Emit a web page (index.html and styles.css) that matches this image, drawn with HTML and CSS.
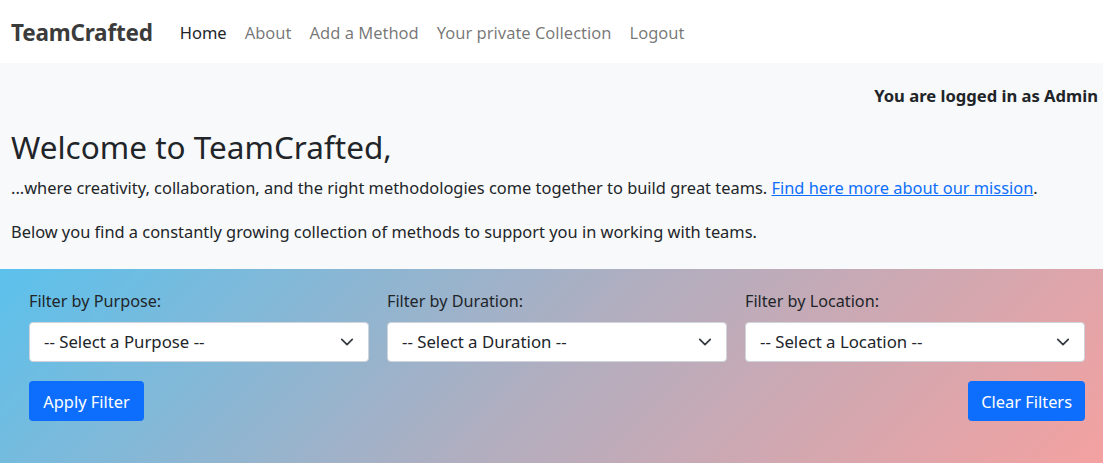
FILE: index.html
```html
<!DOCTYPE html>
<html lang="en">
<head>
<meta charset="utf-8">
<title>TeamCrafted</title>
<link rel="stylesheet" href="styles.css">
</head>
<body>
<nav class="navbar">
  <a class="brand" href="#">TeamCrafted</a>
  <ul class="nav">
    <li><a class="nav-link active" href="#">Home</a></li>
    <li><a class="nav-link" href="#">About</a></li>
    <li><a class="nav-link" href="#">Add a Method</a></li>
    <li><a class="nav-link" href="#">Your private Collection</a></li>
    <li><a class="nav-link" href="#">Logout</a></li>
  </ul>
</nav>
<main class="intro">
  <p class="login">You are logged in as Admin</p>
  <h2 class="title">Welcome to TeamCrafted,</h2>
  <p class="lead first">...where creativity, collaboration, and the right methodologies come together to build great teams. <a href="#" class="link">Find here more about our mission</a>.</p>
  <p class="lead">Below you find a constantly growing collection of methods to support you in working with teams.</p>
</main>
<section class="filters">
  <form class="filter-form">
    <div class="filter-row">
      <div class="field">
        <label class="label">Filter by Purpose:</label>
        <div class="select"><span>-- Select a Purpose --</span><svg class="chev" viewBox="0 0 16 16" width="16" height="16"><path d="M2 5l6 6 6-6" fill="none" stroke="#343a40" stroke-width="2" stroke-linecap="round" stroke-linejoin="round"/></svg></div>
      </div>
      <div class="field">
        <label class="label">Filter by Duration:</label>
        <div class="select"><span>-- Select a Duration --</span><svg class="chev" viewBox="0 0 16 16" width="16" height="16"><path d="M2 5l6 6 6-6" fill="none" stroke="#343a40" stroke-width="2" stroke-linecap="round" stroke-linejoin="round"/></svg></div>
      </div>
      <div class="field">
        <label class="label">Filter by Location:</label>
        <div class="select"><span>-- Select a Location --</span><svg class="chev" viewBox="0 0 16 16" width="16" height="16"><path d="M2 5l6 6 6-6" fill="none" stroke="#343a40" stroke-width="2" stroke-linecap="round" stroke-linejoin="round"/></svg></div>
      </div>
    </div>
    <div class="button-row">
      <button type="button" class="btn">Apply Filter</button>
      <button type="button" class="btn btn-clear">Clear Filters</button>
    </div>
  </form>
</section>
</body>
</html>
```

FILE: styles.css
```css
* { box-sizing: border-box; }
html, body { margin: 0; padding: 0; }
body {
  font-family: "Noto Sans", "Open Sans", sans-serif;
  font-size: 16.4px;
  line-height: 26px;
  color: #212529;
  background: #f8f9fa;
  overflow: hidden;
}
.navbar {
  background: #fff;
  height: 63px;
  display: flex;
  align-items: center;
  padding: 2px 11px 0;
}
.brand {
  font-size: 22.5px;
  font-weight: 700;
  color: #3b3b3b;
  text-decoration: none;
  margin-right: 27px;
  letter-spacing: -0.2px;
}
.nav { list-style: none; margin: 0; padding: 0; display: flex; gap: 18px; }
.nav-link { color: rgba(0,0,0,.55); text-decoration: none; font-size: 16.5px; }
.nav-link.active { color: #212529; }
.intro { padding: 20px 5px 0 11px; height: 206px; }
.login { margin: 0; text-align: right; font-weight: 700; font-size: 16.6px; }
.title { margin: 19px 0 9px; font-size: 31.5px; font-weight: 400; line-height: 38px; }
.lead { margin: 0 0 18px; }
.link { color: #0d6efd; }
.filters {
  height: 194px;
  background: linear-gradient(135deg, #5bc1ec 0%, #b0aec0 50%, #f4a1a0 100%);
  padding: 20px 18px 0 29px;
}
.filter-row { display: grid; grid-template-columns: repeat(3, 1fr); gap: 18px; }
.label { display: block; margin-bottom: 9px; line-height: 24px; font-size: 16.2px; }
.select {
  height: 40px;
  background: #fff;
  border: 1px solid #ced4da;
  border-radius: 4px;
  display: flex;
  align-items: center;
  justify-content: space-between;
  padding: 0 14px;
  font-size: 16.8px;
}
.chev { width: 14px; height: 14px; }
.button-row { display: flex; justify-content: space-between; margin-top: 19px; }
.btn {
  font-family: inherit;
  font-size: 16.4px;
  color: #fff;
  background: #0d6efd;
  border: 0;
  border-radius: 4px;
  height: 40px;
  padding: 0 14px;
  min-width: 115px;
}
.btn-clear { padding: 0 13px; }
```
